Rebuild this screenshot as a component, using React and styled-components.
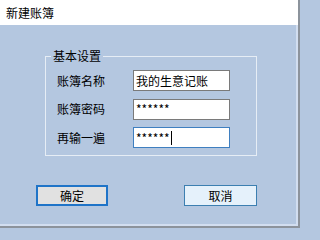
import styled, { createGlobalStyle } from 'styled-components';

const Global = createGlobalStyle`
  html, body {
    margin: 0;
    padding: 0;
    background: #b4c7e0;
  }
  * {
    box-sizing: border-box;
  }
`;

const FONT = `"Noto Sans CJK SC", "Noto Sans", "Liberation Sans", sans-serif`;

const rows = [
  { label: '账簿名称', value: '我的生意记账' },
  { label: '账簿密码', value: '******' },
  { label: '再输一遍', value: '******', focused: true },
];

const App = () => {
  return (
    <Window>
      <Global />
      <TitleBar>新建账簿</TitleBar>
      <Body>
        <Group>
          <Legend>基本设置</Legend>
          {rows.map((r) => (
            <Row key={r.label}>
              <Label>{r.label}</Label>
              <Field $focused={r.focused}>
                {r.value}
                {r.focused && <Caret />}
              </Field>
            </Row>
          ))}
        </Group>
        <Buttons>
          <Button $primary>确定</Button>
          <Button $hover>取消</Button>
        </Buttons>
      </Body>
    </Window>
  );
};

const Window = styled.div`
  width: 300px;
  height: 228px;
  display: flex;
  flex-direction: column;
  font-family: ${FONT};
  font-size: 12px;
  color: #000;
  border-right: 2px solid #8c939c;
  border-bottom: 2px solid #8c939c;
  overflow: hidden;
`;

const TitleBar = styled.div`
  height: 25px;
  flex: none;
  background: #ffffff;
  padding-left: 6px;
  display: flex;
  align-items: center;
  font-size: 12px;
  line-height: 1;
`;

const Body = styled.div`
  flex: 1;
  background: #b4c7e0;
  border-right: 2px solid #d2def0;
  border-bottom: 2px solid #d2def0;
  padding: 31px 0 0 45px;
  display: flex;
  flex-direction: column;
`;

const Group = styled.div`
  position: relative;
  width: 212px;
  height: 100px;
  border: 1px solid #e6edf5;
  padding: 13px 0 0 11px;
  display: flex;
  flex-direction: column;
  gap: 7.5px;
`;

const Legend = styled.span`
  position: absolute;
  top: -8px;
  left: 5px;
  padding: 0 2px;
  background: #b4c7e0;
  line-height: 14px;
  font-size: 12px;
`;

const Row = styled.div`
  display: flex;
  align-items: center;
  height: 21px;
`;

const Label = styled.span`
  width: 76px;
  line-height: 1;
`;

const Field = styled.div`
  width: 97px;
  height: 21px;
  background: #fff;
  border: 1px solid ${(p) => (p.$focused ? '#3f7fc0' : '#7a7a7a')};
  padding-left: 2px;
  display: flex;
  align-items: center;
  font-size: 12px;
  line-height: 1;
`;

const Caret = styled.span`
  display: inline-block;
  width: 1px;
  height: 14px;
  background: #000;
  margin-left: 1px;
`;

const Buttons = styled.div`
  display: flex;
  margin: 29px 0 0 -9px;
  gap: 76px;
`;

const Button = styled.div`
  width: ${(p) => (p.$primary ? '72px' : '73px')};
  height: 21px;
  display: flex;
  align-items: center;
  justify-content: center;
  font-size: 12px;
  line-height: 1;
  background: ${(p) => (p.$hover ? '#e5f1fb' : '#e1e1e1')};
  border: ${(p) => (p.$primary ? '2px solid #1f74c8' : '1px solid #3c7fb1')};
`;

export default App;
